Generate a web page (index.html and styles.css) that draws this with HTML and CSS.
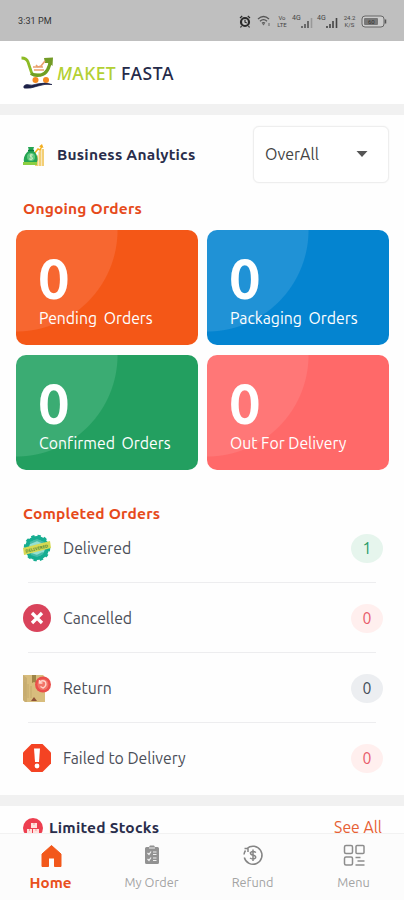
FILE: index.html
```html
<!DOCTYPE html>
<html lang="en">
<head>
  <meta charset="UTF-8">
  <title>Maket Fasta</title>
  <meta name="viewport" content="width=device-width, initial-scale=1">
  <link rel="stylesheet" href="styles.css">
</head>

<body>

  <!-- Status bar -->
  <div class="status-bar">
    <span class="time">3:31 PM</span>
    <div class="status-icons">
      <svg class="alarm" width="12" height="13" viewBox="0 0 12 13">
        <circle cx="6" cy="7" r="4" fill="#c8c8c8" stroke="#2b2b2b" stroke-width="2.2"/>
        <path d="M6 4.8V7.2L7.8 8M1 3L3.2 1M11 3L8.8 1M2.5 11L1.5 12.5M9.5 11L10.5 12.5" fill="none" stroke="#2b2b2b" stroke-width="1.2"/>
      </svg>
      <svg class="wifi" width="14" height="12" viewBox="0 0 14 12">
        <path d="M1 4Q6.500-1 12 4M3 6.300Q6.500 3 10 6.300M5 8.300Q6.500 7 8 8.300" fill="none" stroke="#555" stroke-width="1.300"/>
        <path d="M5 8.500H8L6.500 10.500ZM11.500 8H12.500V11H11.500Z" fill="#666"/>
      </svg>
      <span class="tiny volte">Vo<br>LTE</span>
      <span class="signal">
        <span class="tiny">4G</span>
        <svg width="12" height="11" viewBox="0 0 12 11"><path d="M1 9V11M4 7V11M7 4V11" stroke="#555" stroke-width="1.600"/><path d="M10.500 1V11" stroke="#999" stroke-width="1.600"/></svg>
      </span>
      <span class="signal">
        <span class="tiny">4G</span>
        <svg width="12" height="11" viewBox="0 0 12 11"><path d="M1 9V11M4 7V11M7 4V11M10.500 1V11" stroke="#444" stroke-width="1.600"/></svg>
      </span>
      <span class="tiny speed">24.2<br>K/S</span>
      <svg class="battery" width="26" height="13" viewBox="0 0 26 13">
        <rect x="1" y="1" width="22" height="11" rx="3" fill="#ccc" stroke="#666"/>
        <rect x="3" y="3" width="14" height="7" rx="1" fill="#777"/>
        <path d="M24.500 4.500V8.500" stroke="#555" stroke-width="1.500"/>
        <text x="7" y="9" class="battery-text">60</text>
      </svg>
    </div>
  </div>

  <!-- Logo -->
  <header class="header">
    <svg class="logo-cart" width="34" height="34" viewBox="0 0 34 34">
      <path d="M0.500 2Q5.500 2 7 6L10.500 16.500Q11.500 19 14 19H20" fill="none" stroke="#8dbb25" stroke-width="2.800"/>
      <path d="M10 17.500Q13 20 20 19Q28 17 29.500 3.500" fill="none" stroke="#719f22" stroke-width="3.200"/>
      <path d="M23 2L32 1.500L31.500 10L28 7L24 7Z" fill="#739b26"/>
      <path d="M12 11H22M13 14H23M15 9L17 11L20 10L24 5" fill="none" stroke="#e9a06e" stroke-width="1.600"/>
      <circle cx="14.500" cy="24" r="3" fill="#f58a1f"/>
      <circle cx="25" cy="24" r="3" fill="#f58a1f"/>
      <path d="M3 32Q2 29 6 28.500Q11 30 16 28Q24 26 31 28.500Q24 27.500 17 30Q9 33 3 32Z" fill="#1c2148" stroke="#1c2148" stroke-width="0.700"/>
    </svg>
    <span class="logo-text"><span class="logo-green"><i>M</i>AKET</span> <span class="logo-dark">FASTA</span></span>
  </header>

  <!-- Business analytics -->
  <section class="section analytics">
    <div class="analytics-head">
      <svg width="22" height="22" viewBox="0 0 22 22">
        <path d="M12 22V13L15 11V22M15.500 22V8L18 6V22M18.500 22V5H21V22" fill="#f3cf76"/>
        <path d="M11 10L15 5L17 6L19 2" fill="none" stroke="#f2b21d" stroke-width="1.500"/>
        <path d="M16 2.500L19 0L20.500 4Z" fill="#f2ad20"/>
        <path d="M5 3H11L10 6.500C15 10 16 17 12.500 20H2.500C-1 17 1 10 6 6.500Z" fill="#25a553"/>
        <path d="M5 6.500H11" stroke="#087d3c" stroke-width="1.500"/>
        <path d="M0 18H14V21H0Z" fill="#8bce42"/>
        <circle cx="8" cy="13" r="4" fill="#63ca80"/>
        <path d="M10 11Q7 10 7 12Q10 13 9.500 15Q7.500 16 6 14.800M8 9.800V16.200" fill="none" stroke="#dbf2cb" stroke-width="0.800"/>
      </svg>
      <h2 class="title">Business Analytics</h2>
      <div class="select">
        <span>OverAll</span>
        <svg width="12" height="6" viewBox="0 0 12 6"><path d="M0.500 0H11.500L6 6Z" fill="#555"/></svg>
      </div>
    </div>

    <h3 class="sub-title ongoing">Ongoing Orders</h3>
    <div class="cards">
      <div class="card orange"><b>0</b><span>Pending Orders</span></div>
      <div class="card blue"><b>0</b><span>Packaging Orders</span></div>
      <div class="card green"><b>0</b><span>Confirmed Orders</span></div>
      <div class="card red"><b>0</b><span class="delivery">Out For Delivery</span></div>
    </div>

    <h3 class="sub-title completed">Completed Orders</h3>
    <ul class="order-list">
      <li>
        <svg width="28" height="28" viewBox="0 0 28 28">
          <circle cx="14" cy="14" r="12" fill="#16ad91" stroke="#16ad91" stroke-width="2.500" stroke-dasharray="3.300 3"/>
          <circle cx="14" cy="14" r="8" fill="#94dfd0"/>
          <path d="M7 9L14 6L21 9M8 20L14 22L20 19" fill="none" stroke="#45bba7" stroke-width="2"/>
          <path d="M0 14L27 7L28 14L1 21Z" fill="#d6d953"/>
          <text x="2" y="16" class="stamp-text" transform="rotate(-14 14 14)">DELIVERED</text>
        </svg>
        <span class="name">Delivered</span>
        <span class="badge badge-green">1</span>
      </li>
      <li>
        <svg width="28" height="28" viewBox="0 0 28 28">
          <circle cx="14" cy="14" r="14" fill="#d9435b"/>
          <path d="M9 9L19 19M19 9L9 19" stroke="#fff" stroke-width="3.300"/>
        </svg>
        <span class="name">Cancelled</span>
        <span class="badge badge-red">0</span>
      </li>
      <li>
        <svg width="28" height="28" viewBox="0 0 28 28">
          <path d="M0 1H20L22 3V28H2L0 26Z" fill="#d8bd7d"/>
          <path d="M0 1L4 4V28H2L0 26Z" fill="#c9ae72"/>
          <path d="M9 1H13V9L11 8L9 9Z" fill="#9e8547"/>
          <path d="M2 8V22M5 10V24M8 12V24" stroke="#c4aa6d"/>
          <path d="M8 27L11 23L14 27Z" fill="#8c5137"/>
          <circle cx="20" cy="10.500" r="8" fill="#ea4e4a"/>
          <circle cx="20" cy="10.500" r="5.500" fill="#f27468"/>
          <path d="M17 8Q20 5.500 22.500 8Q24 12 20 14L17.500 12.500M16.500 6V9H19.500" fill="none" stroke="#ffd5cb" stroke-width="1.400"/>
        </svg>
        <span class="name">Return</span>
        <span class="badge badge-gray">0</span>
      </li>
      <li>
        <svg width="28" height="28" viewBox="0 0 28 28">
          <path d="M8.500 0H19.500L28 8.500V19.500L19.500 28H8.500L0 19.500V8.500Z" fill="#f44323"/>
          <path d="M11 4.500H17L16 18H12Z" fill="#fff"/>
          <circle cx="14" cy="22" r="2.400" fill="#fff"/>
        </svg>
        <span class="name">Failed to Delivery</span>
        <span class="badge badge-red">0</span>
      </li>
    </ul>
  </section>

  <!-- Limited stocks -->
  <section class="section stocks">
    <svg width="20" height="20" viewBox="0 0 20 20">
      <circle cx="10" cy="10" r="10" fill="#ed3f50"/>
      <path d="M8 5H14V10H8ZM4 11H9V16H4ZM10 11H16V16H10Z" fill="#ffe2de"/>
      <path d="M11 5V7M6.500 11V13M13 11V13" stroke="#f0a09e"/>
    </svg>
    <h2 class="title">Limited Stocks</h2>
    <span class="see-all">See All</span>
  </section>

  <!-- Bottom navigation -->
  <nav class="bottom-nav">
    <a class="active">
      <svg width="24" height="24" viewBox="0 0 24 24"><path d="M12.500 1.500L22 10V22.500H15.500V14H9.500V22.500H3V10Z" fill="#f2581b" stroke="#f2581b" stroke-linejoin="round"/></svg>
      <span>Home</span>
    </a>
    <a>
      <svg width="24" height="24" viewBox="0 0 24 24">
        <path d="M6.500 3H9L10 1.500H14L15 3H17.500Q19 3 19 4.500V18.500Q19 20 17.500 20H6.500Q5 20 5 18.500V4.500Q5 3 6.500 3Z" fill="#929292"/>
        <path d="M9 4H15M7.500 9L9 10.500L11 7.500M7.500 15L9 16.500L11 13.500M13 8H16.500M13 10.500H16.500M13 14H16.500M13 16.500H16.500" fill="none" stroke="#eee" stroke-width="1.200"/>
      </svg>
      <span>My Order</span>
    </a>
    <a>
      <svg width="24" height="24" viewBox="0 0 24 24">
        <path d="M6 4.500A9 9 0 1 1 3.300 13.500M3 10.500A9 9 0 0 1 4.500 6.500M3.500 4.500H7V8" fill="none" stroke="#858585" stroke-width="1.500"/>
        <path d="M15 8.500Q12 6.500 9.500 8.500Q9 10.500 12 11Q15.500 12 14.500 14Q12 16 9 14M12 5.500V17" fill="none" stroke="#858585" stroke-width="1.500"/>
      </svg>
      <span>Refund</span>
    </a>
    <a>
      <svg width="24" height="24" viewBox="0 0 24 24">
        <g fill="none" stroke="#8d8d8d" stroke-width="1.500">
          <rect x="2.500" y="1.500" width="8" height="8" rx="1.500"/>
          <rect x="14" y="1.500" width="8" height="8" rx="1"/>
          <rect x="2.500" y="13" width="8" height="8" rx="1.500"/>
          <path d="M13.500 13.500H18.500M15.500 17H22.500M13.500 21H22.500"/>
        </g>
      </svg>
      <span>Menu</span>
    </a>
  </nav>

</body>
</html>
```
FILE: styles.css
```css
* {
  box-sizing: border-box;
}

body {
  margin: 0;
  height: 900px;
  overflow: hidden;
  background: #fefefe;
  font-family: Ubuntu, "Noto Sans", sans-serif;
  font-variant-ligatures: none;
  color: #4b4e58;
}

h2, h3, ul {
  margin: 0;
  padding: 0;
}

svg {
  display: block;
  flex: none;
}

/* Status bar */
.status-bar {
  height: 41px;
  padding: 1px 17px 0 18px;
  background: #bfbfbf;
  display: flex;
  align-items: center;
  justify-content: space-between;
}

.time {
  font-family: Roboto, sans-serif;
  font-size: 9px;
  letter-spacing: 0.1px;
  color: #333;
}

.status-icons {
  display: flex;
  align-items: center;
}

.wifi {
  margin-left: 6px;
}

.tiny {
  font: 6px/7px Roboto, sans-serif;
  color: #444;
}

.volte {
  width: 12px;
  margin-left: 5px;
  text-align: center;
}

.signal {
  display: flex;
  height: 13px;
  margin-left: 4px;
}

.signal svg {
  margin-top: 2px;
}

.signal .tiny {
  width: 9px;
  font-size: 7px;
}

.speed {
  width: 15px;
  margin-left: 4px;
  text-align: center;
}

.battery {
  margin-left: 4px;
}

.battery-text {
  font: 6px Roboto, sans-serif;
  fill: #333;
}

/* Logo */
.header {
  height: 63px;
  padding: 0 21px;
  background: #fff;
  display: flex;
  align-items: center;
}

.logo-text {
  display: flex;
  gap: 5px;
  margin: 1px 0 0 2px;
  font-family: "Noto Sans", sans-serif;
  font-size: 17.5px;
  font-weight: 500;
}

.logo-green {
  color: #b3d033;
  letter-spacing: 0.4px;
}

.logo-dark {
  color: #252a49;
  letter-spacing: 0.6px;
}

/* Sections */
.section {
  border-top: 11px solid #f1f1f1;
}

.title {
  font-size: 15.5px;
  line-height: 22px;
  font-weight: 600;
  letter-spacing: 0.23px;
  color: #292d4b;
}

.analytics {
  height: 691px;
  padding: 11px 15px 0 16px;
}

.analytics-head {
  height: 57px;
  padding-left: 7px;
  display: flex;
  align-items: center;
}

.analytics-head .title {
  margin-left: 12px;
}

.select {
  width: 136px;
  height: 57px;
  margin-left: auto;
  padding: 0 20px 2px 11px;
  border: 1px solid #eee;
  border-radius: 6px;
  background: #fff;
  box-shadow: 0 0 2px rgba(0,0,0,0.06);
  display: flex;
  align-items: center;
  justify-content: space-between;
  font-size: 16px;
  color: #444;
}

.sub-title {
  padding-left: 7px;
  font-size: 15.5px;
  line-height: 22px;
  font-weight: 600;
  letter-spacing: 0.2px;
  color: #e64a1b;
}

.ongoing {
  margin-top: 15px;
}

.completed {
  margin-top: 33px;
}

/* Cards */
.cards {
  display: grid;
  grid-template-columns: 1fr 1fr;
  gap: 10px 9px;
  margin-top: 10px;
}

.card {
  height: 115px;
  padding: 23px 0 0 23px;
  border-radius: 10px;
  color: #fff;
  display: flex;
  flex-direction: column;
}

.card b {
  margin-left: -1px;
  font-size: 56px;
  line-height: 51px;
}

.card span {
  margin-top: 3px;
  font-size: 15.8px;
  line-height: 22px;
  word-spacing: 3px;
  white-space: nowrap;
}

.card .delivery {
  word-spacing: 0;
}

.orange {
  background: radial-gradient(circle at 0 0, #f76730 101px, #f45717 102px);
}

.blue {
  background: radial-gradient(circle at 0 0, #2092d6 101px, #0484d0 102px);
}

.green {
  background: radial-gradient(circle at 0 0, #3bac73 101px, #239f60 102px);
}

.red {
  background: radial-gradient(circle at 0 0, #ff7777 101px, #ff6969 102px);
}

/* Completed orders */
.order-list {
  list-style: none;
  padding: 0 6px 0 7px;
}

.order-list li {
  position: relative;
  height: 70px;
  padding-bottom: 24px;
  display: flex;
  align-items: center;
}

.order-list li:not(:last-child)::after {
  content: "";
  position: absolute;
  left: 5px;
  right: 7px;
  bottom: 12px;
  height: 1px;
  background: #ededef;
}

.name {
  margin-left: 12px;
  font-size: 15.8px;
}

.badge {
  width: 32px;
  height: 29px;
  margin-left: auto;
  border-radius: 50%;
  font-size: 15.8px;
  line-height: 28px;
  text-align: center;
}

.badge-green {
  background: #e6f5ed;
  color: #279b67;
}

.badge-red {
  background: #ffefee;
  color: #e85b6b;
}

.badge-gray {
  background: #eceef1;
  color: #444c58;
}

.stamp-text {
  font: bold 4.3px "Noto Sans", sans-serif;
  fill: #588c3c;
}

/* Limited stocks */
.stocks {
  padding: 11px 22px 0 23px;
  display: flex;
  align-items: center;
}

.stocks .title {
  margin-left: 6px;
}

.see-all {
  margin-left: auto;
  font-size: 15.8px;
  line-height: 20px;
  padding-bottom: 2px;
  color: #e76034;
}

/* Bottom navigation */
.bottom-nav {
  position: fixed;
  left: 0;
  right: 0;
  bottom: 0;
  height: 67px;
  padding-top: 10px;
  background: #fcfcfc;
  border-top: 1px solid #f2f2f2;
  display: flex;
}

.bottom-nav a {
  flex: 1;
  display: flex;
  flex-direction: column;
  align-items: center;
  font-size: 12.7px;
  line-height: 20px;
  color: #a3a3a3;
}

.bottom-nav span {
  margin-top: 4px;
}

.bottom-nav .active {
  font-size: 15.2px;
  font-weight: bold;
  color: #e9501d;
}

.bottom-nav .active span {
  margin-top: 5px;
}
```
